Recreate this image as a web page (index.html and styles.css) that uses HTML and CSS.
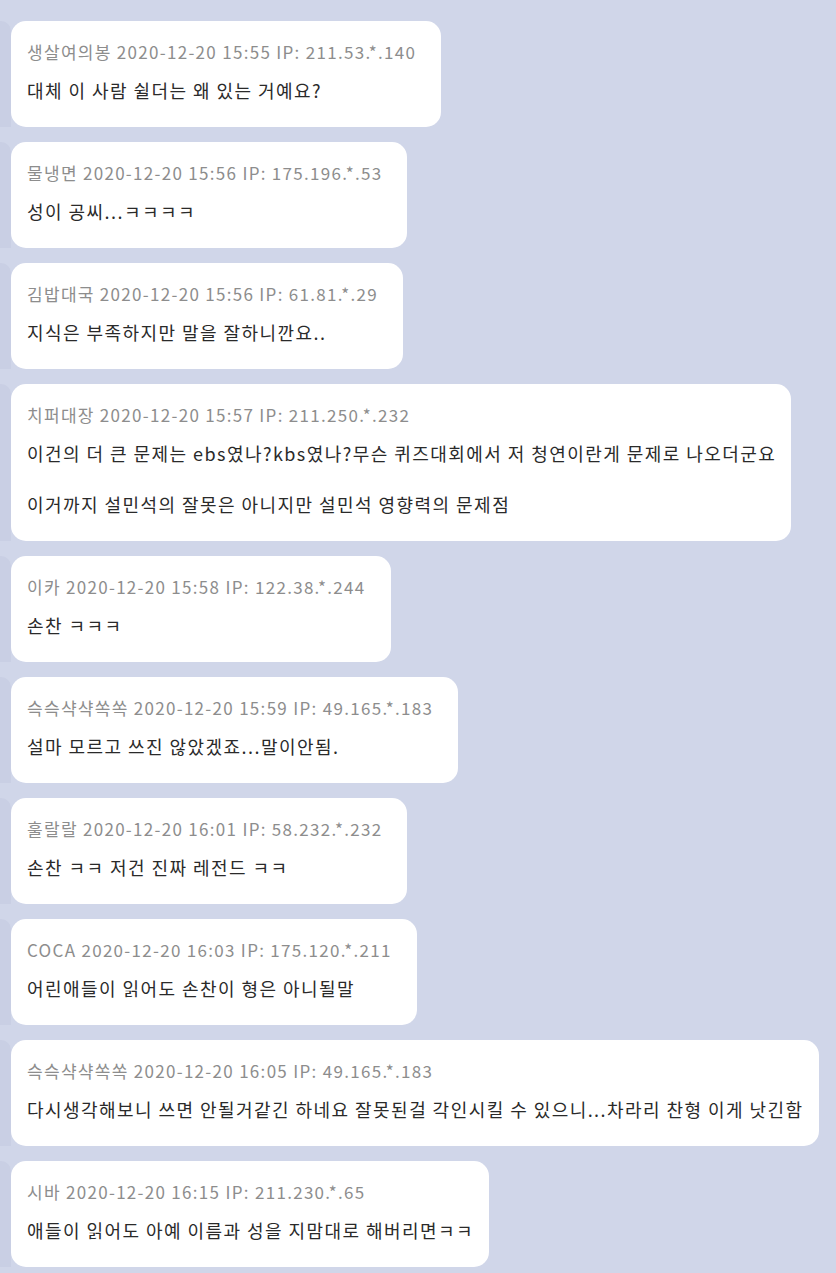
FILE: index.html
```html
<!DOCTYPE html>
<html>
<head>
    <meta charset="UTF-8">
    <title>댓글</title>
    <link rel="stylesheet" href="styles.css">
</head>
<body>
    <div class="comments">
        <div class="comment">
            <div class="meta">생살여의봉 2020-12-20 15:55 IP: 211.53.*.140</div>
            <p>대체 이 사람 쉴더는 왜 있는 거예요?</p>
        </div>
        <div class="comment">
            <div class="meta">물냉면 2020-12-20 15:56 IP: 175.196.*.53</div>
            <p>성이 공씨...ㅋㅋㅋㅋ</p>
        </div>
        <div class="comment">
            <div class="meta">김밥대국 2020-12-20 15:56 IP: 61.81.*.29</div>
            <p>지식은 부족하지만 말을 잘하니깐요..</p>
        </div>
        <div class="comment">
            <div class="meta">치퍼대장 2020-12-20 15:57 IP: 211.250.*.232</div>
            <p>이건의 더 큰 문제는 ebs였나?kbs였나?무슨 퀴즈대회에서 저 청연이란게 문제로 나오더군요</p>
            <p>이거까지 설민석의 잘못은 아니지만 설민석 영향력의 문제점</p>
        </div>
        <div class="comment">
            <div class="meta">이카 2020-12-20 15:58 IP: 122.38.*.244</div>
            <p>손찬 ㅋㅋㅋ</p>
        </div>
        <div class="comment">
            <div class="meta">슥슥샥샥쏙쏙 2020-12-20 15:59 IP: 49.165.*.183</div>
            <p>설마 모르고 쓰진 않았겠죠...말이안됨.</p>
        </div>
        <div class="comment">
            <div class="meta">훌랄랄 2020-12-20 16:01 IP: 58.232.*.232</div>
            <p>손찬 ㅋㅋ 저건 진짜 레전드 ㅋㅋ</p>
        </div>
        <div class="comment">
            <div class="meta">COCA 2020-12-20 16:03 IP: 175.120.*.211</div>
            <p>어린애들이 읽어도 손찬이 형은 아니될말</p>
        </div>
        <div class="comment">
            <div class="meta">슥슥샥샥쏙쏙 2020-12-20 16:05 IP: 49.165.*.183</div>
            <p>다시생각해보니 쓰면 안될거같긴 하네요 잘못된걸 각인시킬 수 있으니...차라리 찬형 이게 낫긴함</p>
        </div>
        <div class="comment">
            <div class="meta">시바 2020-12-20 16:15 IP: 211.230.*.65</div>
            <p>애들이 읽어도 아예 이름과 성을 지맘대로 해버리면ㅋㅋ</p>
        </div>
    </div>
</body>
</html>
```

FILE: styles.css
```css
body {
    margin: 0;
    background-color: #d0d6e9;
    font-family: "Noto Sans CJK KR", "Noto Sans", sans-serif;
}

.comments {
    display: flex;
    flex-direction: column;
    align-items: flex-start;
    gap: 15px;
    padding: 21px 0 0 11px;
}

.comment {
    position: relative;
    background: #fff;
    border-radius: 15px;
    padding: 20px 15px 26px 16px;
}

/* darker strip behind the left edge */
.comment::before {
    content: "";
    position: absolute;
    left: -11px;
    top: 0;
    bottom: 0;
    width: 11px;
    background: #c9cfe4;
    border-top-right-radius: 10px;
}

.meta {
    color: #8d8d8d;
    font-size: 17px;
    letter-spacing: 1.3px;
    line-height: 22px;
    margin-bottom: 16px;
    padding-right: 10px;
}

.comment p {
    margin: 0;
    color: #2a2a2a;
    font-size: 18px;
    letter-spacing: 1.45px;
    line-height: 22px;
}

.comment p + p {
    margin-top: 29px;
}
```
